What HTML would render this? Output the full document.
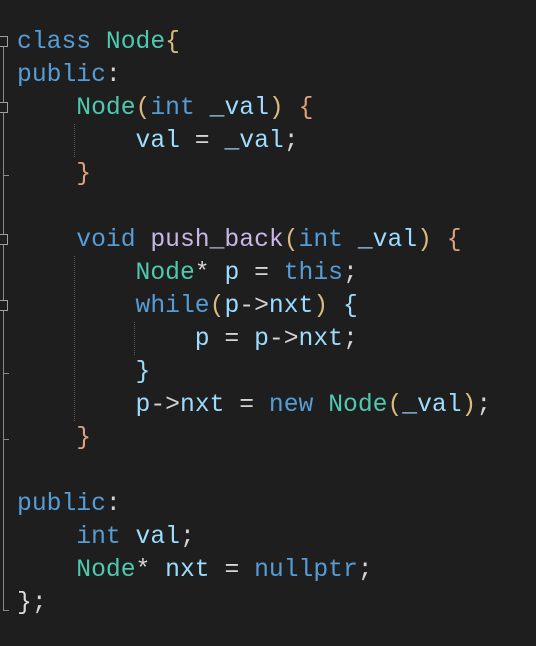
<!DOCTYPE html>
<html><head><meta charset="utf-8"><style>
html,body{margin:0;padding:0;background:#1e1e1e;width:536px;height:646px;overflow:hidden}
pre{position:absolute;left:17px;top:26px;margin:0;font-family:"Liberation Mono",monospace;font-size:24.7px;line-height:33px;color:#d4d4d4;white-space:pre}
.k{color:#569cd6}.t{color:#4ec9b0}.v{color:#9cdcfe}.f{color:#c8b6e8}.g{color:#d7ba7d}.o{color:#e0a07a}.b{color:#9cdcfe}.w{color:#dcdcdc}
.fold{position:absolute;left:0;width:8px;height:11px;border:1px solid #a0a0a0;border-left:none;box-sizing:border-box;background:#1e1e1e}
.vl{position:absolute;left:3px;width:1px;background:#8a8a8a}
.tk{position:absolute;left:3px;width:6px;height:1px;background:#8a8a8a}
.ig{position:absolute;width:0;border-left:1px dotted #5a5a5a}
</style></head><body>
<div class="vl" style="top:38px;height:573px"></div>
<div class="fold" style="top:36px"></div>
<div class="fold" style="top:102px"></div>
<div class="fold" style="top:234px"></div>
<div class="fold" style="top:300px"></div>
<div class="tk" style="top:175px"></div>
<div class="tk" style="top:373px"></div>
<div class="tk" style="top:439px"></div>
<div class="tk" style="top:610px"></div>
<div class="ig" style="left:74px;top:124px;height:33px"></div>
<div class="ig" style="left:74px;top:256px;height:165px"></div>
<div class="ig" style="left:134px;top:322px;height:33px"></div>
<pre><span class="k">class</span> <span class="t">Node</span><span class="g">{</span>
<span class="k">public</span>:
    <span class="t">Node</span><span class="g">(</span><span class="k">int</span> <span class="v">_val</span><span class="g">)</span> <span class="o">{</span>
        <span class="v">val</span> = <span class="v">_val</span>;
    <span class="o">}</span>

    <span class="k">void</span> <span class="f">push_back</span><span class="g">(</span><span class="k">int</span> <span class="v">_val</span><span class="g">)</span> <span class="o">{</span>
        <span class="t">Node</span>* <span class="v">p</span> = <span class="k">this</span>;
        <span class="k">while</span><span class="g">(</span><span class="v">p</span>-&gt;<span class="v">nxt</span><span class="g">)</span> <span class="b">{</span>
            <span class="v">p</span> = <span class="v">p</span>-&gt;<span class="v">nxt</span>;
        <span class="b">}</span>
        <span class="v">p</span>-&gt;<span class="v">nxt</span> = <span class="k">new</span> <span class="t">Node</span><span class="g">(</span><span class="v">_val</span><span class="g">)</span>;
    <span class="o">}</span>

<span class="k">public</span>:
    <span class="k">int</span> <span class="v">val</span>;
    <span class="t">Node</span>* <span class="v">nxt</span> = <span class="k">nullptr</span>;
<span class="w">}</span>;</pre>
</body></html>
